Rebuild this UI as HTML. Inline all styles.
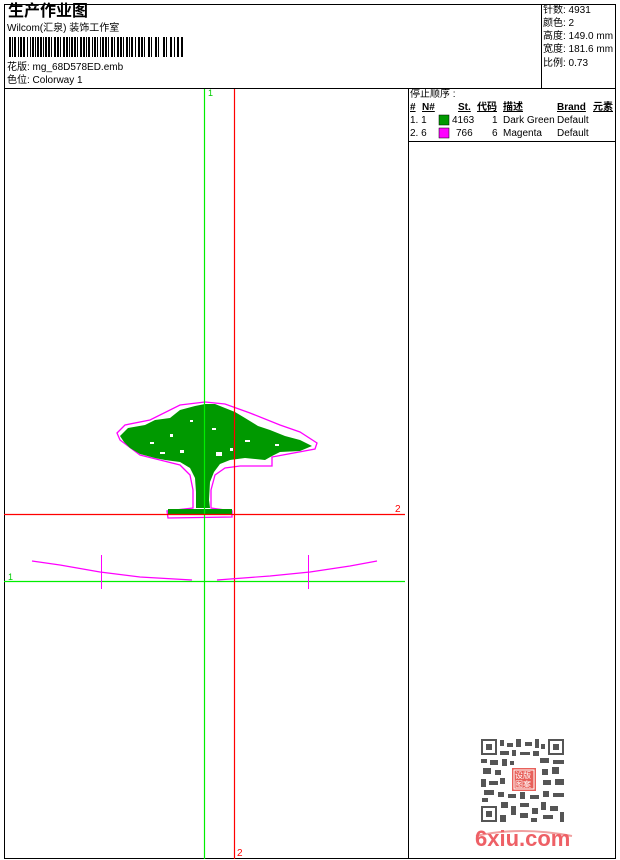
<!DOCTYPE html>
<html><head><meta charset="utf-8">
<style>
*{margin:0;padding:0}
body{width:620px;height:860px;background:#fff;position:relative;overflow:hidden;font-family:"Liberation Sans","Noto Sans CJK SC",sans-serif;font-size:10px;color:#000}
.t{position:absolute;white-space:nowrap;line-height:12px}
.b{font-weight:bold;text-decoration:underline}
</style></head><body>
<svg width="620" height="860" style="position:absolute;left:0;top:0">
<g fill="none" stroke="#000" stroke-width="1">
<rect x="4.5" y="4.5" width="611" height="854"/>
<line x1="4" y1="88.5" x2="616" y2="88.5"/>
<line x1="541.5" y1="4" x2="541.5" y2="88"/>
<line x1="408.5" y1="88" x2="408.5" y2="859"/>
<line x1="408" y1="141.5" x2="616" y2="141.5"/>
</g>
<g fill="#000">
<rect x="9" y="37" width="2" height="20"/><rect x="12" y="37" width="1" height="20"/><rect x="14" y="37" width="2" height="20"/><rect x="18" y="37" width="1" height="20"/><rect x="20" y="37" width="2" height="20"/><rect x="23" y="37" width="2" height="20"/><rect x="27" y="37" width="1" height="20"/><rect x="30" y="37" width="1" height="20"/><rect x="32" y="37" width="2" height="20"/><rect x="35" y="37" width="1" height="20"/><rect x="37" y="37" width="2" height="20"/><rect x="40" y="37" width="2" height="20"/><rect x="43" y="37" width="1" height="20"/><rect x="45" y="37" width="2" height="20"/><rect x="48" y="37" width="2" height="20"/><rect x="51" y="37" width="1" height="20"/><rect x="54" y="37" width="2" height="20"/><rect x="57" y="37" width="2" height="20"/><rect x="60" y="37" width="1" height="20"/><rect x="63" y="37" width="2" height="20"/><rect x="66" y="37" width="2" height="20"/><rect x="69" y="37" width="1" height="20"/><rect x="71" y="37" width="2" height="20"/><rect x="74" y="37" width="2" height="20"/><rect x="77" y="37" width="1" height="20"/><rect x="80" y="37" width="2" height="20"/><rect x="83" y="37" width="2" height="20"/><rect x="86" y="37" width="1" height="20"/><rect x="88" y="37" width="2" height="20"/><rect x="92" y="37" width="1" height="20"/><rect x="94" y="37" width="2" height="20"/><rect x="97" y="37" width="1" height="20"/><rect x="100" y="37" width="1" height="20"/><rect x="102" y="37" width="2" height="20"/><rect x="105" y="37" width="2" height="20"/><rect x="108" y="37" width="1" height="20"/><rect x="111" y="37" width="2" height="20"/><rect x="114" y="37" width="1" height="20"/><rect x="117" y="37" width="2" height="20"/><rect x="120" y="37" width="2" height="20"/><rect x="123" y="37" width="1" height="20"/><rect x="126" y="37" width="2" height="20"/><rect x="129" y="37" width="1" height="20"/><rect x="131" y="37" width="2" height="20"/><rect x="135" y="37" width="1" height="20"/><rect x="138" y="37" width="2" height="20"/><rect x="141" y="37" width="2" height="20"/><rect x="144" y="37" width="1" height="20"/><rect x="148" y="37" width="2" height="20"/><rect x="151" y="37" width="1" height="20"/><rect x="155" y="37" width="2" height="20"/><rect x="158" y="37" width="1" height="20"/><rect x="163" y="37" width="2" height="20"/><rect x="166" y="37" width="1" height="20"/><rect x="170" y="37" width="2" height="20"/><rect x="174" y="37" width="1" height="20"/><rect x="177" y="37" width="2" height="20"/><rect x="181" y="37" width="2" height="20"/>
</g>
<!-- tree -->
<polygon fill="none" stroke="#ff00ff" stroke-width="1.3" points="117,433 125,425 150,420 180,405 205,402 225,404 250,413 280,425 300,432 317,443 315,449 272,457 272,466 240,466 225,468 215,475 211,490 211,508 232,511 232,517 168,518 167,511 193,508 193,490 190,475 180,465 160,460 140,455 120,440"/>
<g fill="#009900">
<polygon points="120,436 128,428 145,425 155,420 170,418 180,410 195,406 205,404 215,404 225,408 235,412 245,418 258,426 270,430 285,436 300,440 312,446 300,451 280,452 272,456 265,460 245,458 230,460 220,464 214,472 210,482 209,500 210,508 196,508 196,492 195,478 190,468 180,462 165,460 155,458 140,454 130,448 124,442"/>
<rect x="168" y="509" width="64" height="6"/>
</g>
<g fill="#fff">
<rect x="150" y="442" width="4" height="2"/><rect x="170" y="434" width="3" height="3"/><rect x="190" y="420" width="3" height="2"/><rect x="212" y="428" width="4" height="2"/><rect x="245" y="440" width="5" height="2"/><rect x="230" y="448" width="3" height="3"/><rect x="180" y="450" width="4" height="3"/><rect x="160" y="452" width="5" height="2"/><rect x="275" y="444" width="4" height="2"/><rect x="216" y="452" width="6" height="4"/>
</g>
<g stroke-width="1.2">
<line x1="204.5" y1="89" x2="204.5" y2="859" stroke="#00ee00"/>
<line x1="4" y1="581.5" x2="405" y2="581.5" stroke="#00ee00"/>
<line x1="234.5" y1="89" x2="234.5" y2="859" stroke="#ff0000"/>
<line x1="4" y1="514.5" x2="405" y2="514.5" stroke="#ff0000"/>
</g>
<g fill="none" stroke="#ff00ff" stroke-width="1.2">
<polyline points="32,561 60,565 100,572 140,577 192,580"/>
<polyline points="217,580 270,576 310,572 350,566 377,561"/>
</g>
<g stroke="#ff00ff" stroke-width="1"><line x1="101.5" y1="555" x2="101.5" y2="589"/><line x1="308.5" y1="555" x2="308.5" y2="589"/></g>
<text x="208" y="96" fill="#00cc00" font-size="9" font-family="Liberation Sans">1</text>
<text x="8" y="580" fill="#00cc00" font-size="9" font-family="Liberation Sans">1</text>
<text x="395" y="512" fill="#ff0000" font-size="10" font-family="Liberation Sans">2</text>
<text x="237" y="856" fill="#ff0000" font-size="10" font-family="Liberation Sans">2</text>
<rect x="439" y="115" width="10" height="10" fill="#009900" stroke="#000" stroke-width=".5"/>
<rect x="439" y="128" width="10" height="10" fill="#ff00ff" stroke="#000" stroke-width=".5"/>
<!-- QR -->
<g fill="#555">
<rect x="481" y="739" width="16" height="16"/><rect x="548" y="739" width="16" height="16"/><rect x="481" y="806" width="16" height="16"/>
</g>
<g fill="#fff"><rect x="483" y="741" width="12" height="12"/><rect x="550" y="741" width="12" height="12"/><rect x="483" y="808" width="12" height="12"/></g>
<g fill="#555"><rect x="486" y="744" width="6" height="6"/><rect x="553" y="744" width="6" height="6"/><rect x="486" y="811" width="6" height="6"/>
<rect x="500" y="740" width="4" height="6"/><rect x="507" y="743" width="6" height="4"/><rect x="516" y="739" width="5" height="8"/><rect x="525" y="742" width="7" height="4"/><rect x="535" y="739" width="4" height="9"/><rect x="541" y="744" width="4" height="5"/>
<rect x="500" y="751" width="9" height="4"/><rect x="512" y="750" width="4" height="6"/><rect x="520" y="752" width="10" height="3"/><rect x="533" y="751" width="6" height="5"/>
<rect x="481" y="759" width="6" height="4"/><rect x="490" y="760" width="8" height="5"/><rect x="502" y="759" width="5" height="7"/><rect x="510" y="761" width="4" height="4"/><rect x="540" y="758" width="9" height="5"/><rect x="553" y="760" width="11" height="4"/>
<rect x="483" y="768" width="8" height="6"/><rect x="495" y="770" width="6" height="5"/><rect x="542" y="769" width="6" height="6"/><rect x="552" y="767" width="7" height="7"/>
<rect x="481" y="779" width="5" height="8"/><rect x="489" y="781" width="9" height="4"/><rect x="500" y="778" width="5" height="6"/><rect x="543" y="780" width="8" height="5"/><rect x="555" y="779" width="9" height="6"/>
<rect x="484" y="790" width="10" height="5"/><rect x="498" y="792" width="6" height="5"/><rect x="508" y="794" width="8" height="4"/><rect x="520" y="792" width="5" height="7"/><rect x="530" y="795" width="9" height="4"/><rect x="543" y="791" width="6" height="6"/><rect x="553" y="793" width="11" height="4"/>
<rect x="482" y="798" width="6" height="4"/><rect x="501" y="802" width="7" height="6"/><rect x="511" y="806" width="5" height="9"/><rect x="520" y="803" width="9" height="4"/><rect x="532" y="808" width="6" height="6"/><rect x="541" y="802" width="5" height="8"/><rect x="550" y="806" width="8" height="5"/><rect x="560" y="812" width="4" height="10"/>
<rect x="500" y="815" width="6" height="7"/><rect x="520" y="813" width="8" height="5"/><rect x="531" y="818" width="6" height="4"/><rect x="543" y="815" width="10" height="4"/>
</g>
<rect x="512" y="768" width="24" height="23" fill="#e8605a"/>
<rect x="514" y="770" width="20" height="19" fill="none" stroke="#fff" stroke-width="1"/>
<path d="M476 836 Q520 826 572 836" fill="none" stroke="#f0a0a0" stroke-width="2"/>
</svg>
<div class="t" style="left:8px;top:3px;font-size:16px;font-weight:bold;line-height:18px">生产作业图</div>
<div class="t" style="left:7px;top:23px">Wilcom(汇泉) 装饰工作室</div>
<div class="t" style="left:7px;top:62px">花版: mg_68D578ED.emb</div>
<div class="t" style="left:7px;top:75px">色位: Colorway 1</div>
<div class="t" style="left:543px;top:5px">针数: 4931</div>
<div class="t" style="left:543px;top:18px">颜色: 2</div>
<div class="t" style="left:543px;top:31px">高度: 149.0 mm</div>
<div class="t" style="left:543px;top:44px">宽度: 181.6 mm</div>
<div class="t" style="left:543px;top:58px">比例: 0.73</div>
<div class="t" style="left:410px;top:89px">停止顺序 :</div>
<div class="t b" style="left:410px;top:102px">#</div>
<div class="t b" style="left:422px;top:102px">N#</div>
<div class="t b" style="left:458px;top:102px">St.</div>
<div class="t b" style="left:477px;top:102px">代码</div>
<div class="t b" style="left:503px;top:102px">描述</div>
<div class="t b" style="left:557px;top:102px">Brand</div>
<div class="t b" style="left:593px;top:102px">元素</div>
<div class="t" style="left:410px;top:115px">1. 1</div>
<div class="t" style="left:452px;top:115px">4163</div>
<div class="t" style="left:492px;top:115px">1</div>
<div class="t" style="left:503px;top:115px">Dark Green</div>
<div class="t" style="left:557px;top:115px">Default</div>
<div class="t" style="left:410px;top:128px">2. 6</div>
<div class="t" style="left:456px;top:128px">766</div>
<div class="t" style="left:492px;top:128px">6</div>
<div class="t" style="left:503px;top:128px">Magenta</div>
<div class="t" style="left:557px;top:128px">Default</div>
<div class="t" style="left:515px;top:771px;color:#fff;font-size:8px;line-height:9px;width:20px;white-space:normal">设版图案</div>
<div class="t" style="left:475px;top:827px;color:#ee6066;font-size:22px;font-weight:bold;line-height:24px">6xiu.com</div>
</body></html>
